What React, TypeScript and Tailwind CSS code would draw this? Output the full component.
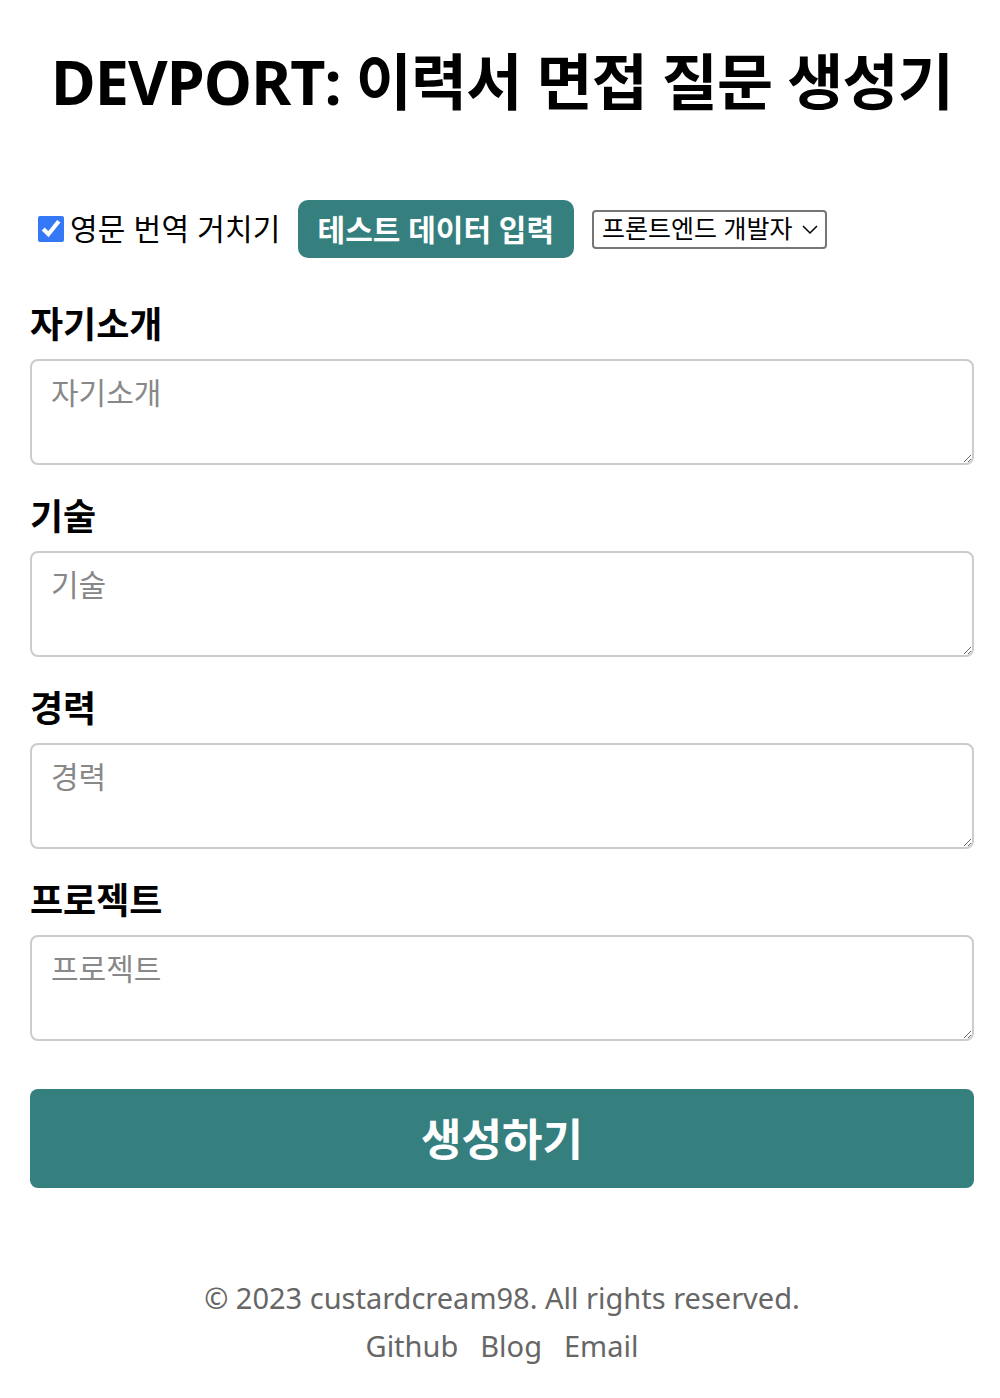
import React from "react";

const font = { fontFamily: '"Noto Sans", "Noto Sans CJK KR", sans-serif' };

const sections = ["자기소개", "기술", "경력", "프로젝트"];

export default function App() {
  return (
    <div className="min-h-[1398px] bg-white text-black pl-[30px] pr-[26px]" style={font}>
      {/* Title */}
      <h1 className="pt-[40px] text-center text-[61px] font-bold leading-[84px] tracking-[-0.9px]">
        DEVPORT: 이력서 면접 질문 생성기
      </h1>

      {/* Options row */}
      <div className="mt-[76px] flex items-center pl-[8px]">
        <label className="flex items-center gap-[6px] text-[30px] leading-none tracking-[0.2px]">
          <input
            type="checkbox"
            defaultChecked
            className="w-[26px] h-[26px] accent-[#3478f6]"
          />
          영문 번역 거치기
        </label>
        <button className="ml-[17px] h-[58px] px-[20px] rounded-[10px] bg-[#357f7f] text-white text-[30px] font-bold">
          테스트 데이터 입력
        </button>
        <div className="ml-[18px] h-[39px] w-[235px] flex items-center justify-between border-2 border-[#767676] rounded-[4px] pl-[8px] pr-[6px] text-[25px]">
          <span>프론트엔드 개발자</span>
          <svg width="18" height="18" viewBox="0 0 18 18" fill="none">
            <path d="M2 6l7 7 7-7" stroke="#000" strokeWidth="1.5" />
          </svg>
        </div>
      </div>

      {/* Sections */}
      <div className="mt-[45px] flex flex-col gap-[30px]">
        {sections.map((s) => (
          <div key={s} className="flex flex-col">
            <label className="text-[36px] font-bold leading-[44px] mb-[12px]">{s}</label>
            <textarea
              placeholder={s}
              className="h-[106px] w-full border-2 border-[#cccccc] rounded-[8px] px-[19px] py-[12px] text-[30px] leading-[40px] placeholder-[#888888] outline-none"
            />
          </div>
        ))}
      </div>

      <button className="mt-[48px] w-full h-[99px] rounded-[8px] bg-[#357f7f] text-white text-[44px] font-bold">
        생성하기
      </button>

      {/* Footer */}
      <footer className="mt-[86px] text-center text-[29px] leading-[48px] text-[#666666]">
        <div>© 2023 custardcream98. All rights reserved.</div>
        <div className="flex justify-center gap-[22px]">
          <a>Github</a>
          <a>Blog</a>
          <a>Email</a>
        </div>
      </footer>
    </div>
  );
}
